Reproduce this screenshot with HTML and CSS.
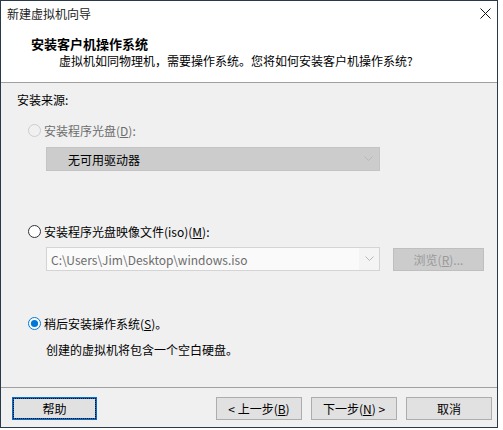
FILE: index.html
```html
<!DOCTYPE html>
<html lang="zh-CN">
<head>
<meta charset="utf-8">
<title>新建虚拟机向导</title>
<link rel="stylesheet" href="styles.css">
</head>
<body>
<div class="window">
  <div class="titlebar">
    <span class="title">新建虚拟机向导</span>
    <svg class="close" width="11" height="11" viewBox="0 0 11 11"><path d="M0.5 0.5 L10.5 10.5 M10.5 0.5 L0.5 10.5" stroke="#111" stroke-width="1" fill="none"/></svg>
  </div>
  <div class="header">
    <div class="h-title">安装客户机操作系统</div>
    <div class="h-sub">虚拟机如同物理机，需要操作系统。您将如何安装客户机操作系统?</div>
  </div>
  <div class="content">
    <div class="label">安装来源:</div>

    <div class="radio-row r1 disabled">
      <svg class="radio" width="13" height="13" viewBox="0 0 13 13"><circle cx="6.5" cy="6.5" r="6" fill="#f0f0f0" stroke="#cccccc"/></svg>
      <span>安装程序光盘(<u>D</u>):</span>
    </div>
    <div class="combo combo-disabled">
      <span class="combo-text">无可用驱动器</span>
      <svg class="chev" width="9" height="6" viewBox="0 0 9 6"><path d="M0.5 0.5 L4.5 4.5 L8.5 0.5" stroke="#b8b8b8" fill="none"/></svg>
    </div>

    <div class="radio-row r2">
      <svg class="radio" width="13" height="13" viewBox="0 0 13 13"><circle cx="6.5" cy="6.5" r="6" fill="#ffffff" stroke="#333333"/></svg>
      <span>安装程序光盘映像文件(iso)(<u>M</u>):</span>
    </div>
    <div class="iso-row">
      <div class="combo combo-iso">
        <span class="combo-text iso-text">C:\Users\Jim\Desktop\windows.iso</span>
        <span class="drop">
          <svg class="chev" width="9" height="6" viewBox="0 0 9 6"><path d="M0.5 0.5 L4.5 4.5 L8.5 0.5" stroke="#b8b8b8" fill="none"/></svg>
        </span>
      </div>
      <div class="btn btn-disabled browse">浏览(<u>R</u>)...</div>
    </div>

    <div class="radio-row r3">
      <svg class="radio" width="13" height="13" viewBox="0 0 13 13"><circle cx="6.5" cy="6.5" r="6" fill="#ffffff" stroke="#0078d7"/><circle cx="6.5" cy="6.5" r="3.6" fill="#0078d7"/></svg>
      <span>稍后安装操作系统(<u>S</u>)。</span>
    </div>
    <div class="desc">创建的虚拟机将包含一个空白硬盘。</div>
  </div>
  <div class="footer">
    <div class="btn btn-default help">帮助</div>
    <div class="nav">
      <div class="btn">&lt; 上一步(<u>B</u>)</div>
      <div class="btn">下一步(<u>N</u>) &gt;</div>
      <div class="btn">取消</div>
    </div>
  </div>
</div>
</body>
</html>
```

FILE: styles.css
```css
html, body {
  margin: 0;
  padding: 0;
  background: #ffffff;
}

body {
  font-family: "Noto Sans CJK SC", "Noto Sans", sans-serif;
  font-size: 12px;
  color: #000;
  line-height: 17px;
}

u {
  text-decoration: underline;
  text-underline-offset: 1px;
}

.window {
  width: 498px;
  height: 428px;
  box-sizing: border-box;
  border: 1px solid #2b3a4a;
  display: flex;
  flex-direction: column;
  background: #f0f0f0;
}

.titlebar {
  height: 29px;
  background: #ffffff;
  display: flex;
  justify-content: space-between;
  align-items: flex-start;
  padding: 4px 0 0 6px;
  box-sizing: border-box;
}

.title {
  color: #222;
}

.close {
  margin: 3px 6px 0 0;
  width: 11px;
  height: 11px;
}

.header {
  background: #ffffff;
  height: 53px;
  box-sizing: border-box;
  padding: 5px 0 0 30px;
  border-bottom: 1px solid #a0a0a0;
}

.h-title {
  font-weight: bold;
  font-size: 13px;
}

.h-sub {
  padding-left: 28px;
}

.content {
  height: 304px;
  box-sizing: border-box;
  padding: 8px 0 0 16px;
}

.label {
  height: 17px;
}

.radio-row {
  display: flex;
  align-items: center;
  height: 17px;
  margin-left: 11px;
  gap: 3px;
}

.radio {
  display: block;
  flex: none;
}

.radio-row.disabled {
  color: #6d6d6d;
}

.r1 { margin-top: 14px; }
.r2 { margin-top: 52px; }
.r3 { margin-top: 44px; }

.combo {
  height: 24px;
  width: 334px;
  box-sizing: border-box;
  display: flex;
  align-items: center;
  position: relative;
}

.combo-disabled {
  margin: 8px 0 0 29px;
  background: #cccccc;
  border: 1px solid #c4c4c4;
  padding-left: 21px;
}

.combo-disabled .chev {
  margin-left: auto;
  margin-right: 6px;
}

.iso-row {
  margin: 7px 0 0 29px;
  display: flex;
  align-items: center;
  gap: 13px;
}

.combo-iso {
  background: #fafafa;
  border: 1px solid #d4d4d4;
  padding-left: 4px;
}

.iso-text {
  color: #6d6d6d;
}

.drop {
  margin-left: auto;
  width: 20px;
  height: 22px;
  display: flex;
  align-items: center;
  justify-content: center;
  background: #f4f4f4;
}

.btn {
  height: 23px;
  width: 86px;
  box-sizing: border-box;
  border: 1px solid #adadad;
  background: #e1e1e1;
  display: flex;
  align-items: center;
  justify-content: center;
}

.btn-disabled {
  background: #cccccc;
  border-color: #bfbfbf;
  color: #9a9a9a;
}

.browse {
  width: 91px;
}

.desc {
  margin: 9px 0 0 29px;
}

.footer {
  flex: 1;
  border-top: 1px solid #a0a0a0;
  display: flex;
  align-items: flex-start;
  padding: 9px 5px 0 11px;
}

.help {
  width: 85px;
}

.btn-default {
  border: 2px solid #0a6ac8;
  outline: 1px dotted #111;
  outline-offset: -2px;
}

.nav {
  margin-left: auto;
  display: flex;
  gap: 9px;
}
```
